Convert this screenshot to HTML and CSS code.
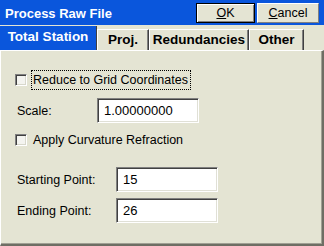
FILE: index.html
```html
<!DOCTYPE html>
<html lang="en">
<head>
  <meta charset="UTF-8" />
  <title>Process Raw File</title>
  <link rel="stylesheet" href="styles.css">
</head>
<body>
  <div class="dialog">
    <header class="titlebar">
      <span class="title">Process Raw File</span>
      <div class="title-buttons">
        <button type="button" class="btn btn-default"><u>O</u>K</button>
        <button type="button" class="btn"><u>C</u>ancel</button>
      </div>
    </header>

    <nav class="tabs">
      <div class="tab active">Total Station</div>
      <div class="tab tab-proj">Proj.</div>
      <div class="tab tab-red">Redundancies</div>
      <div class="tab tab-other">Other</div>
    </nav>

    <main class="panel">
      <div class="check-row">
        <span class="checkbox"></span>
        <span class="check-label focused">Reduce to Grid Coordinates</span>
      </div>

      <div class="field-row scale-row">
        <label class="field-label scale-label">Scale:</label>
        <div class="textbox">1.00000000</div>
      </div>

      <div class="check-row curv-row">
        <span class="checkbox"></span>
        <span class="check-label">Apply Curvature Refraction</span>
      </div>

      <div class="field-row start-row">
        <label class="field-label point-label">Starting Point:</label>
        <div class="textbox">15</div>
      </div>

      <div class="field-row end-row">
        <label class="field-label point-label">Ending Point:</label>
        <div class="textbox">26</div>
      </div>
    </main>
  </div>
</body>
</html>
```

FILE: styles.css
```css
* {
  margin: 0;
  padding: 0;
  box-sizing: border-box;
}
body {
  font-family: 'Liberation Sans', Arial, sans-serif;
  font-size: 12.5px;
  color: #000;
  background: #e4e4d3;
  width: 324px;
  height: 246px;
  overflow: hidden;
}
.dialog {
  display: flex;
  flex-direction: column;
  width: 324px;
  height: 246px;
}

/* title bar */
.titlebar {
  height: 25px;
  background: #0a56dc;
  display: flex;
  align-items: center;
  justify-content: space-between;
  padding: 0 5px 0 5px;
}
.title {
  color: #fff;
  font-weight: 700;
  font-size: 13px;
  margin-top: 1px;
}
.title-buttons {
  display: flex;
  gap: 2px;
  height: 20px;
  margin-top: 3px;
  align-self: flex-start;
}
.btn {
  font-family: inherit;
  font-size: 12.5px;
  color: #000;
  background: #e4e4d3;
  border: 1px solid;
  border-color: #fff #808080 #808080 #fff;
  height: 20px;
  width: 62px;
  line-height: 18px;
}
.btn-default {
  width: 59px;
  border: 1px solid #000;
  box-shadow: inset 1px 1px 0 #fff, inset -1px -1px 0 #808080;
}
.btn u {
  text-decoration-thickness: 1px;
  text-underline-offset: 1px;
}

/* tabs */
.tabs {
  display: flex;
  height: 24px;
  margin-top: 1px;
  align-items: flex-end;
}
.tab {
  height: 21px;
  font-weight: 700;
  font-size: 13.5px;
  color: #000;
  text-align: center;
  line-height: 20px;
  border-left: 1px solid #fff;
  border-top: 1px solid #fff;
  border-right: 1px solid #404040;
  box-shadow: inset -1px 0 0 #808080;
}
.tab.active {
  width: 97px;
  height: 24px;
  line-height: 22px;
  background: #0a56dc;
  color: #fff;
  border: none;
  border-right: 1px solid #404040;
  box-shadow: none;
}
.tab-proj {
  width: 52px;
}
.tab-red {
  width: 100px;
}
.tab-other {
  width: 55px;
}

/* panel */
.panel {
  flex: 1;
  border-top: 1px solid #fff;
  border-left: 1px solid #fff;
  border-right: 2px solid #6e6e64;
  border-bottom: 2px solid #6e6e64;
  box-shadow: inset -1px -1px 0 #a0a094;
  padding: 19px 0 0 15px;
  display: flex;
  flex-direction: column;
}
.check-row {
  display: flex;
  align-items: center;
  height: 20px;
}
.checkbox {
  width: 12px;
  height: 12px;
  background: #f4f4f0;
  border: 1px solid;
  border-color: #808080 #fff #fff #808080;
  box-shadow: inset 1px 1px 0 #404040, inset -1px -1px 0 #d8d8cc;
  margin-left: -1px;
  margin-right: 4px;
}
.check-label {
  height: 20px;
  line-height: 18px;
  padding: 0 2px 0 1px;
  border: 1px solid transparent;
}
.check-label.focused {
  border: 1px dotted #000;
}
.curv-row {
  margin-top: 7px;
}
.field-row {
  display: flex;
  align-items: center;
  height: 25px;
}
.scale-row {
  margin-top: 8px;
}
.start-row {
  margin-top: 17px;
}
.end-row {
  margin-top: 6px;
}
.field-label {
  padding-left: 1px;
}
.scale-label {
  width: 81px;
}
.point-label {
  width: 100px;
}
.textbox {
  width: 102px;
  height: 25px;
  background: #fff;
  border: 1px solid;
  border-color: #808080 #fff #fff #808080;
  box-shadow: inset 1px 1px 0 #404040, inset -1px -1px 0 #e0e0d6;
  padding-left: 6px;
  line-height: 23px;
  font-size: 13px;
}
```
